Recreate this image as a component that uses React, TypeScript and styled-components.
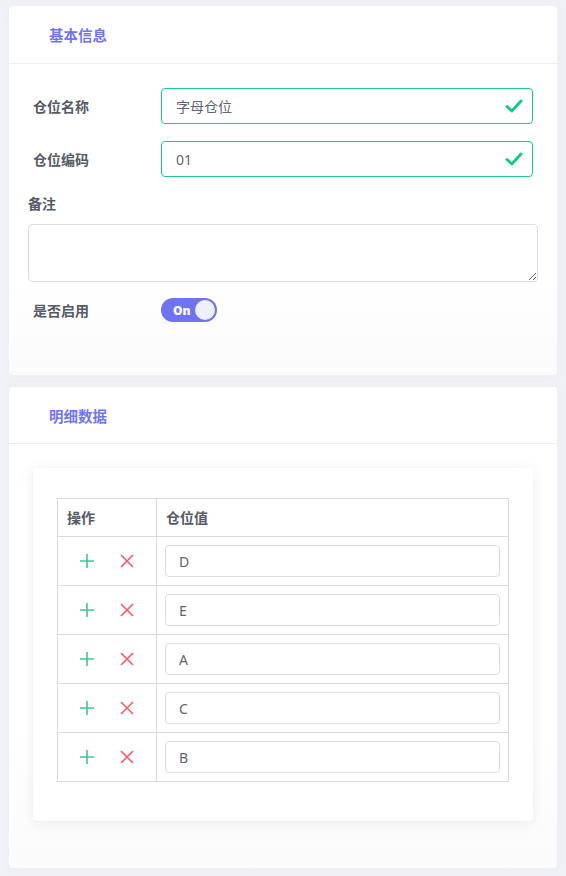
import React from "react";
import styled, { createGlobalStyle } from "styled-components";

const GlobalStyle = createGlobalStyle`
    html, body {
        margin: 0;
        padding: 0;
        background: #f1f2f7;
    }

    body {
        font-family: "Noto Sans", "Noto Sans CJK SC", sans-serif;
        color: #555a66;
    }

    * {
        box-sizing: border-box;
    }
`;

const Page = styled.div`
    display: flex;
    flex-direction: column;
    gap: 12px;
    padding: 6px 9px 8px;
    min-height: 876px;
`;

const Card = styled.section`
    background: linear-gradient(to bottom, #ffffff 0%, #ffffff 72%, #fbfbfc 100%);
    border-radius: 4px;
    box-shadow: 0 0 8px rgba(220, 222, 235, 0.35);
`;

const CardHeader = styled.div<{ $h?: number }>`
    height: ${(p) => p.$h ?? 58}px;
    display: flex;
    align-items: center;
    padding-left: 40px;
    border-bottom: 1px solid #ededf0;
    font-size: 14.5px;
    font-weight: 700;
    color: #7275ef;
`;

const FormBody = styled.div`
    padding: 24px 24px 53px;
    display: flex;
    flex-direction: column;
`;

const FormRow = styled.div<{ $mt?: number }>`
    display: flex;
    align-items: center;
    margin-top: ${(p) => p.$mt ?? 0}px;
`;

const Label = styled.label`
    width: 128px;
    flex-shrink: 0;
    font-size: 14px;
    font-weight: 700;
    color: #555a66;
`;

const BlockLabel = styled.label`
    display: block;
    margin: 18px 0 0 -5px;
    font-size: 14px;
    font-weight: 700;
    color: #555a66;
    line-height: 18px;
`;

const InputWrap = styled.div`
    position: relative;
    flex: 1;
`;

const TextInput = styled.input<{ $valid?: boolean }>`
    width: 100%;
    height: 36px;
    padding: 0 40px 0 14px;
    border: 1px solid ${(p) => (p.$valid ? "#17c98c" : "#dcdce2")};
    border-radius: 4px;
    font: inherit;
    font-size: 14px;
    color: #5f6470;
    background: #fff;
    outline: none;
`;

const CheckMark = styled.svg`
    position: absolute;
    right: 10px;
    top: 50%;
    transform: translateY(-50%);
`;

const TextArea = styled.textarea`
    display: block;
    margin: 11px -5px 0 -5px;
    width: calc(100% + 10px);
    height: 58px;
    border: 1px solid #dcdce2;
    border-radius: 4px;
    resize: vertical;
    outline: none;
    font: inherit;
`;

const Switch = styled.div`
    position: relative;
    width: 56px;
    height: 24px;
    border-radius: 12px;
    background: #7073ef;
    display: flex;
    align-items: center;
    padding-left: 12px;
    font-family: "Open Sans", "Noto Sans", sans-serif;
    font-size: 12px;
    font-weight: 800;
    color: #fff;
`;

const Knob = styled.span`
    position: absolute;
    right: 2px;
    top: 2px;
    width: 20px;
    height: 20px;
    border-radius: 50%;
    background: #eef0fb;
`;

const DetailBody = styled.div`
    padding: 24px 24px 47px;
`;

const InnerCard = styled.div`
    background: #fff;
    border-radius: 4px;
    box-shadow: 0 2px 14px rgba(200, 202, 215, 0.35);
    padding: 30px 24px 39px;
`;

const Table = styled.table`
    width: 100%;
    border-collapse: collapse;
    border: 1px solid #d9d9de;
`;

const Th = styled.th<{ $w?: number }>`
    height: 38px;
    line-height: 18px;
    width: ${(p) => (p.$w ? `${p.$w}px` : "auto")};
    text-align: left;
    padding: 0 9px;
    border: 1px solid #d9d9de;
    font-size: 14px;
    font-weight: 700;
    color: #555a66;
`;

const Td = styled.td`
    height: 49px;
    padding: 0 8px;
    border: 1px solid #d9d9de;
`;

const Actions = styled.div`
    display: flex;
    align-items: center;
    gap: 26px;
    padding-left: 14px;
`;

const IconButton = styled.button`
    border: none;
    background: none;
    padding: 0;
    display: flex;
    cursor: pointer;
`;

const CellInput = styled.input`
    width: 100%;
    height: 32px;
    padding: 0 13px;
    border: 1px solid #dcdce2;
    border-radius: 4px;
    font: inherit;
    font-size: 14px;
    color: #5f6470;
    outline: none;
`;

const Check = () => (
    <CheckMark width="18" height="14" viewBox="0 0 18 14">
        <path d="M2 7.5 L6.8 12 L16 2" fill="none" stroke="#16c98b" strokeWidth="3" strokeLinecap="round" strokeLinejoin="round" />
    </CheckMark>
);

const PlusIcon = () => (
    <svg width="14" height="14" viewBox="0 0 14 14">
        <path d="M7 0 V14 M0 7 H14" stroke="#3ec98e" strokeWidth="1.6" />
    </svg>
);

const CrossIcon = () => (
    <svg width="14" height="14" viewBox="0 0 14 14">
        <path d="M1 1 L13 13 M13 1 L1 13" stroke="#f4586e" strokeWidth="1.6" />
    </svg>
);

const rows = ["D", "E", "A", "C", "B"];

const App = () => {
    return (
        <>
            <GlobalStyle />
            <Page>
                <Card>
                    <CardHeader>基本信息</CardHeader>
                    <FormBody>
                        <FormRow>
                            <Label>仓位名称</Label>
                            <InputWrap>
                                <TextInput $valid defaultValue="字母仓位" />
                                <Check />
                            </InputWrap>
                        </FormRow>
                        <FormRow $mt={17}>
                            <Label>仓位编码</Label>
                            <InputWrap>
                                <TextInput $valid defaultValue="01" />
                                <Check />
                            </InputWrap>
                        </FormRow>
                        <BlockLabel>备注</BlockLabel>
                        <TextArea />
                        <FormRow $mt={16}>
                            <Label>是否启用</Label>
                            <Switch>
                                On
                                <Knob />
                            </Switch>
                        </FormRow>
                    </FormBody>
                </Card>
                <Card>
                    <CardHeader $h={57}>明细数据</CardHeader>
                    <DetailBody>
                        <InnerCard>
                            <Table>
                                <thead>
                                    <tr>
                                        <Th $w={99}>操作</Th>
                                        <Th>仓位值</Th>
                                    </tr>
                                </thead>
                                <tbody>
                                    {rows.map((v) => (
                                        <tr key={v}>
                                            <Td>
                                                <Actions>
                                                    <IconButton><PlusIcon /></IconButton>
                                                    <IconButton><CrossIcon /></IconButton>
                                                </Actions>
                                            </Td>
                                            <Td>
                                                <CellInput defaultValue={v} />
                                            </Td>
                                        </tr>
                                    ))}
                                </tbody>
                            </Table>
                        </InnerCard>
                    </DetailBody>
                </Card>
            </Page>
        </>
    );
};

export default App;
